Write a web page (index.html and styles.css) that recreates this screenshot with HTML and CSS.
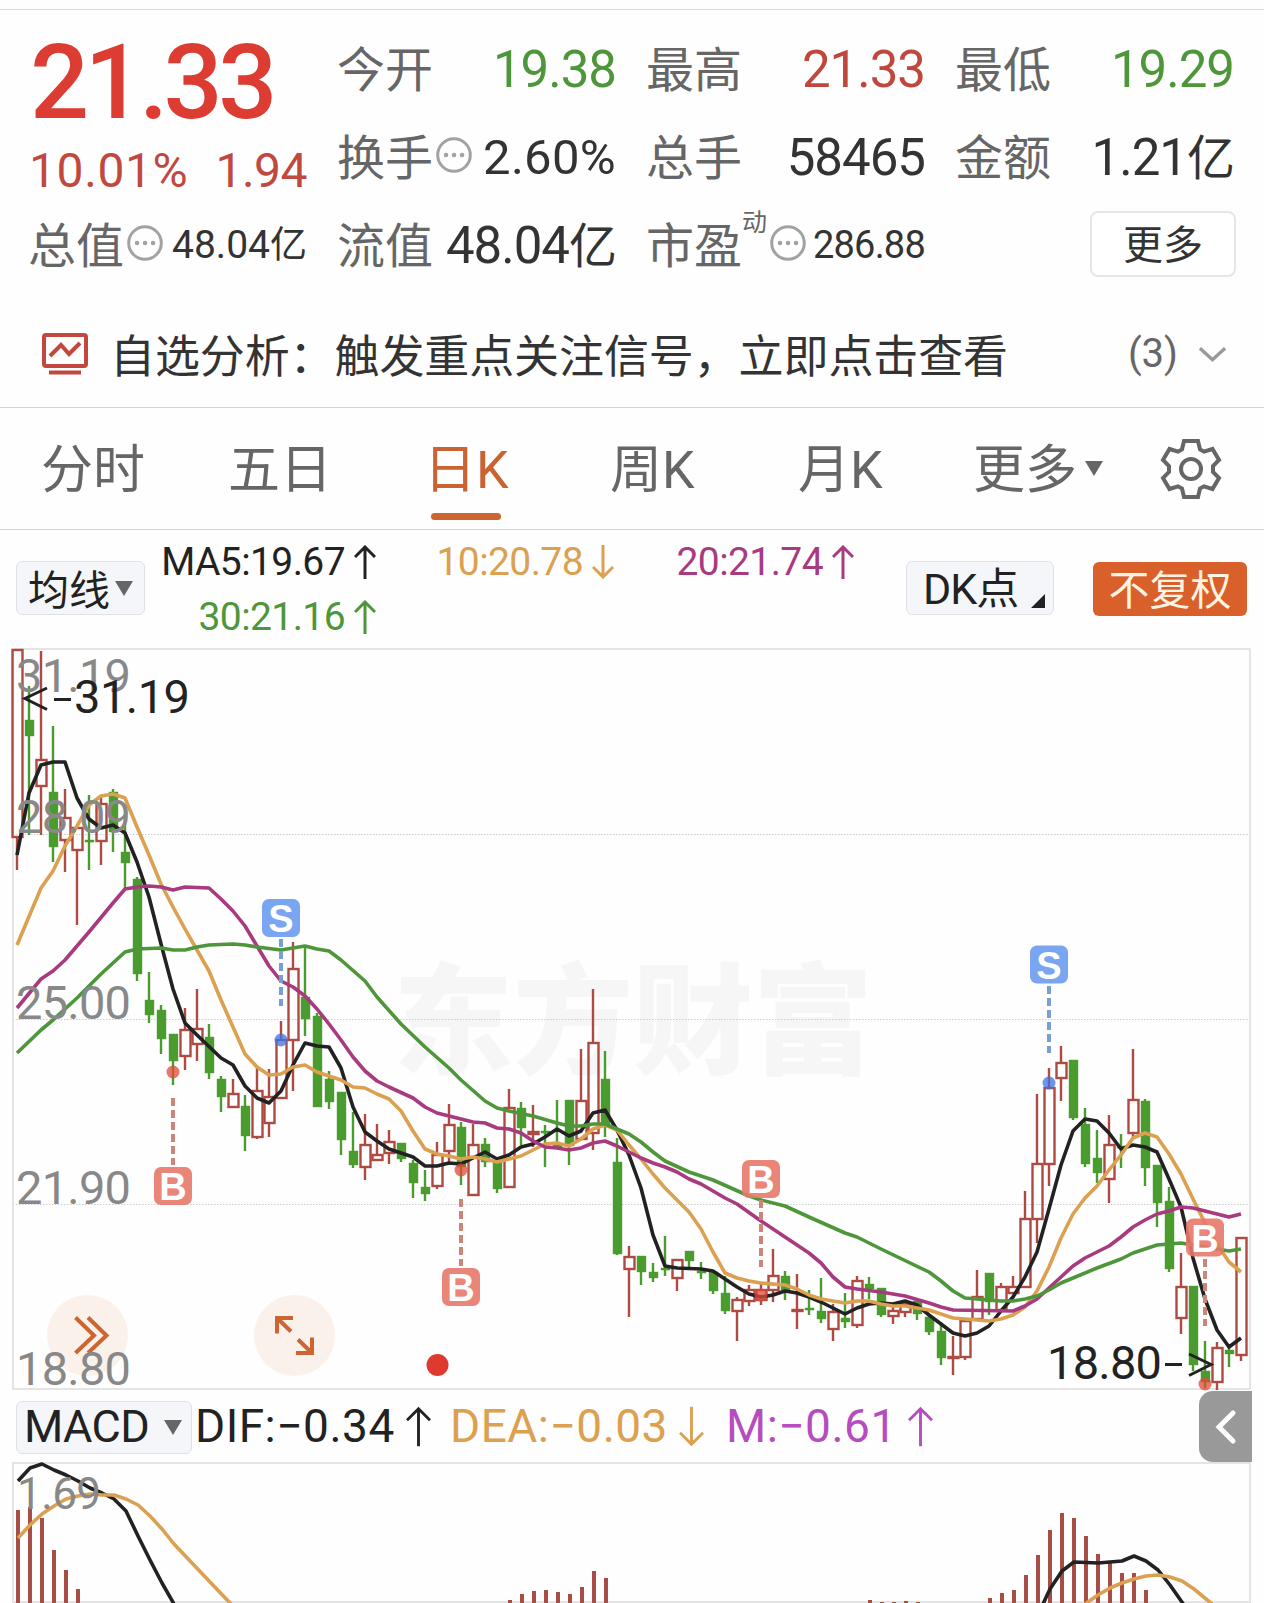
FILE: index.html
```html
<!DOCTYPE html>
<html lang="zh-CN">
<head>
    <meta charset="UTF-8">
    <title>日K</title>
    <link rel="stylesheet" href="styles.css">
</head>
<body>
<div class="quote">
    <div class="price-block">
        <div class="price">21.33</div>
        <div class="change"><span class="rate">10.01%</span><span>1.94</span></div>
    </div>
    <div class="cell"><span class="label">今开</span><span class="num green">19.38</span></div>
    <div class="cell"><span class="label">最高</span><span class="num red">21.33</span></div>
    <div class="cell"><span class="label">最低</span><span class="num green">19.29</span></div>
    <div class="cell"><span class="label">换手</span><svg class="dots" viewBox="0 0 36 36"><circle cx="18" cy="18" r="16.3"/><path d="M10 18h.1M18 18h.1M26 18h.1"/></svg><span class="num pct">2.60%</span></div>
    <div class="cell"><span class="label">总手</span><span class="num">58465</span></div>
    <div class="cell"><span class="label">金额</span><span class="num">1.21<i>亿</i></span></div>
    <div class="cell"><span class="label">总值</span><svg class="dots" viewBox="0 0 36 36"><circle cx="18" cy="18" r="16.3"/><path d="M10 18h.1M18 18h.1M26 18h.1"/></svg><span class="num small">48.04<i>亿</i></span></div>
    <div class="cell"><span class="label">流值</span><span class="num">48.04<i>亿</i></span></div>
    <div class="cell"><span class="label">市盈</span><span class="sup">动</span><svg class="dots" viewBox="0 0 36 36"><circle cx="18" cy="18" r="16.3"/><path d="M10 18h.1M18 18h.1M26 18h.1"/></svg><span class="num small pe">286.88</span></div>
    <div class="cell end"><button class="more">更多</button></div>
</div>

<div class="notice">
    <svg class="notice-icon" viewBox="0 0 46 42"><rect x="2" y="2" width="42" height="31" rx="2"/><path d="M8 23l11-11 8 9 11-11M7 39.5h32"/></svg>
    <span class="notice-text">自选分析：触发重点关注信号，立即点击查看</span>
    <span class="notice-count">(3)</span>
    <svg class="chevron" viewBox="0 0 30 18"><path d="M2 3l13 12L28 3"/></svg>
</div>

<div class="tabs">
    <span>分时</span>
    <span>五日</span>
    <span class="active">日K</span>
    <span>周K</span>
    <span>月K</span>
    <span>更多<b class="tri"></b></span>
    <svg class="gear" viewBox="-31 -31 62 62"><path d="M-7-28H7L9-19.5 13-17.300 21.500-20 28-9 22-3V3L28 9 21.500 20 13 17.300 9 19.500 7 28H-7L-9 19.500-13 17.300-21.500 20-28 9-22 3V-3L-28-9-21.500-20-13-17.300-9-19.500Z"/><circle r="10"/></svg>
</div>

<div class="ma-bar">
    <button class="btn ma-btn">均线<b class="tri"></b></button>
    <div class="ma-values">
        <span class="ma black">MA5:19.67<svg class="arrow" viewBox="0 0 22 34"><path d="M11 34V2M1 12L11 2l10 10"/></svg></span>
        <span class="ma orange">10:20.78<svg class="arrow" viewBox="0 0 22 34"><path d="M11 0v32M1 22l10 10 10-10"/></svg></span>
        <span class="ma purple">20:21.74<svg class="arrow" viewBox="0 0 22 34"><path d="M11 34V2M1 12L11 2l10 10"/></svg></span>
        <span class="ma green">30:21.16<svg class="arrow" viewBox="0 0 22 34"><path d="M11 34V2M1 12L11 2l10 10"/></svg></span>
    </div>
    <button class="btn dk-btn">DK点<b class="corner"></b></button>
    <button class="btn fq-btn">不复权</button>
</div>

<svg class="kline" id="kline" viewBox="12 648 1241 743">
    <text class="watermark" x="393" y="1065" textLength="480">东方财富</text>
    <path class="grid" d="M13 834.500H1251M13 1019.500H1251M13 1204.500H1251"/>
    <rect class="frame" x="13" y="649" width="1237" height="740"/>
    <g id="candles"></g>
    <g id="lines"></g>
    <g id="marks"></g>
    <circle class="float" cx="87.500" cy="1335.500" r="40.500"/>
    <path class="float-icon" d="M75.500 1317.500l18.500 18-18.500 17.500M88 1317.500l18.500 18-18.500 17.500"/>
    <circle class="float" cx="294.500" cy="1335.500" r="40.500"/>
    <path class="float-icon" d="M293 1318H277V1333.500M277 1318l14 13.500M296 1353H312V1337.500M312 1353l-14-13.500"/>
    <circle class="red-dot" cx="437.500" cy="1365" r="11"/>
    <g class="axis">
        <text x="16" y="692" textLength="115">31.19</text>
        <text x="16" y="833" textLength="115">28.09</text>
        <text x="16" y="1019" textLength="115">25.00</text>
        <text x="16" y="1204" textLength="115">21.90</text>
        <text x="16" y="1385" textLength="115">18.80</text>
    </g>
    <g class="extreme">
        <path d="M47 688L25 698.500 47 709.500M54 699.500H71"/>
        <text x="74" y="713" textLength="116">31.19</text>
        <path d="M1189 1354l22 10.500-22 11M1165 1364.500h17"/>
        <text x="1047" y="1379" textLength="115">18.80</text>
    </g>
</svg>

<div class="macd-bar">
    <button class="btn macd-btn">MACD<b class="tri"></b></button>
    <span class="macd dif">DIF:−0.34<svg class="arrow" viewBox="0 0 26 41"><path d="M13 41V2M1 14L13 2l12 12"/></svg></span>
    <span class="macd dea">DEA:−0.03<svg class="arrow" viewBox="0 0 26 41"><path d="M13 0v39M1 27l12 12 12-12"/></svg></span>
    <span class="macd m">M:−0.61<svg class="arrow" viewBox="0 0 26 41"><path d="M13 41V2M1 14L13 2l12 12"/></svg></span>
    <div class="drawer"><svg viewBox="0 0 24 36"><path d="M19 4L5 18l14 14"/></svg></div>
</div>

<svg class="macd-chart" viewBox="12 1462 1241 141">
    <rect class="frame" x="13" y="1463" width="1237" height="139"/>
    <g id="bars"></g>
    <g id="macd-lines"></g>
    <g class="axis"><text class="top-value" x="17" y="1509" textLength="84">1.69</text></g>
</svg>

<script src="chart.js"></script>
</body>
</html>
```

FILE: styles.css
```css
body {
    margin: 0;
    width: 1264px;
    height: 1603px;
    overflow: hidden;
    background: #fefefe;
    color: #333;
    font-family: Roboto, "Noto Sans CJK SC", sans-serif;
}

button {
    font-family: inherit;
    padding: 0;
    margin: 0;
    box-sizing: border-box;
}

.red { color: #bf473d; }
.green { color: #4d963a; }
.black { color: #222; }
.orange { color: #dba050; }
.purple { color: #a83a80; }

/* quote */
.quote {
    display: grid;
    grid-template-columns: repeat(4, 278px);
    grid-template-rows: repeat(3, 88px);
    column-gap: 31px;
    margin-top: 9px;
    padding: 14px 29px 0;
    border-top: 1px solid #d9d9d9;
}

.price-block {
    grid-row: span 2;
}

.price {
    padding: 3px 0 0 1px;
    color: #dc3c32;
    font-size: 104px;
    font-weight: 500;
    line-height: 112px;
    letter-spacing: -4.5px;
}

.change {
    display: flex;
    justify-content: space-between;
    color: #c1483f;
    font-size: 48px;
    line-height: 64px;
    letter-spacing: -0.5px;
}

.rate {
    letter-spacing: 0.6px;
}

.cell {
    display: flex;
    align-items: center;
    white-space: nowrap;
}

.label {
    padding-top: 5px;
    margin-left: -1px;
    color: #666;
    font-size: 48px;
    line-height: 83px;
}

.num {
    padding-top: 3px;
    margin-left: auto;
    font-size: 51px;
    line-height: 85px;
    letter-spacing: -1px;
}

.num i {
    font-style: normal;
    font-size: 48px;
}

.pct {
    font-size: 49px;
    letter-spacing: 0.3px;
}

.small {
    font-size: 39px;
    letter-spacing: 0;
}

.small i {
    font-size: 37px;
}

.pe {
    font-size: 38px;
    letter-spacing: -0.8px;
}

.sup {
    align-self: flex-start;
    color: #666;
    font-size: 25px;
    line-height: 24px;
    margin-top: 11px;
}

.dots {
    width: 36px;
    height: 36px;
    margin: 0 0 2px 3px;
    fill: none;
    stroke: #a2a2a2;
    stroke-width: 3;
}

.dots path {
    stroke-width: 4.5;
    stroke-linecap: round;
}

.end {
    justify-content: flex-end;
}

.more {
    width: 146px;
    height: 66px;
    margin-right: -2px;
    padding-bottom: 5px;
    background: #fff;
    border: 2px solid #e6e6e6;
    border-radius: 8px;
    color: #333;
    font-size: 40px;
}

/* notice */
.notice {
    display: flex;
    align-items: center;
    height: 119px;
    padding: 12px 37px 0 42px;
    box-sizing: border-box;
}

.notice-icon {
    width: 46px;
    height: 42px;
    fill: none;
    stroke: #c2473e;
    stroke-width: 4;
}

.notice-text {
    margin-left: 22px;
    font-size: 45px;
    letter-spacing: -0.1px;
    white-space: nowrap;
}

.notice-count {
    margin-left: auto;
    color: #666;
    font-size: 40px;
}

.chevron {
    width: 29px;
    height: 18px;
    margin-left: 20px;
    fill: none;
    stroke: #999;
    stroke-width: 3.5;
}

/* period tabs */
.tabs {
    display: grid;
    grid-template-columns: 187px 196px 186px 188px 175px 187px 62px;
    align-items: center;
    height: 123px;
    padding-left: 41px;
    box-sizing: border-box;
    border-top: 1px solid #d4d4d4;
    border-bottom: 1px solid #d4d4d4;
    color: #666;
    font-size: 52px;
    line-height: 121px;
}

.tabs span {
    display: flex;
    align-items: center;
    height: 117px;
    padding-top: 4px;
    white-space: nowrap;
}

.tabs .active {
    position: relative;
    color: #cb6231;
}

.tabs .active::after {
    content: "";
    position: absolute;
    left: 7px;
    bottom: 9px;
    width: 70px;
    height: 7px;
    border-radius: 4px;
    background: #cf6430;
}

.tri {
    width: 0;
    height: 0;
    border-left: 9px solid transparent;
    border-right: 9px solid transparent;
    border-top: 15px solid #666;
}

.tabs .tri {
    margin: 0 0 4px 8px;
}

.gear {
    width: 62px;
    height: 62px;
    fill: none;
    stroke: #666;
    stroke-width: 4;
}

/* moving averages */
.ma-bar {
    display: flex;
    height: 118px;
    padding: 0 16px;
}

.btn {
    display: flex;
    align-items: center;
    height: 54px;
    background: #f5f6f9;
    border: 1px solid #dfe1e4;
    border-radius: 6px;
    color: #222;
    white-space: nowrap;
}

.ma-btn {
    width: 129px;
    margin-top: 31px;
    padding: 0 0 3px 11px;
    font-size: 41px;
}

.ma-btn .tri {
    margin: 3px 0 0 5px;
}

.ma-values {
    display: grid;
    grid-template-columns: 231px 238px 240px;
    grid-template-rows: 55px 55px;
    width: 709px;
    margin-top: 4px;
    justify-items: end;
}

.ma {
    display: flex;
    align-items: center;
    font-size: 39px;
    letter-spacing: -0.6px;
}

.arrow {
    width: 22px;
    height: 34px;
    margin-left: 9px;
    fill: none;
    stroke: currentColor;
    stroke-width: 3;
}

.dk-btn {
    width: 148px;
    margin: 31px 39px 0 52px;
    padding: 0 0 6px 16px;
    font-size: 43px;
    letter-spacing: -1px;
}

.corner {
    align-self: flex-end;
    margin: 0 0 0 13px;
    border-left: 14px solid transparent;
    border-bottom: 14px solid #222;
}

.fq-btn {
    width: 154px;
    margin-top: 32px;
    padding-bottom: 4px;
    justify-content: center;
    background: #d9602a;
    border: none;
    color: #fff3e4;
    font-size: 41px;
}

/* charts */
.kline,
.macd-chart {
    display: block;
    width: 1241px;
    margin-left: 12px;
    overflow: visible;
}

.kline {
    height: 743px;
}

.macd-chart {
    height: 141px;
}

.frame {
    fill: none;
    stroke: #e4e4e4;
    stroke-width: 2;
}

.grid {
    stroke: #ccc;
    stroke-dasharray: 1.5 1.5;
}

.watermark {
    fill: #f6f6f6;
    font: 900 120px "Noto Sans CJK SC", sans-serif;
}

.axis {
    fill: #888;
    font-size: 47px;
}

.top-value {
    font-size: 44px;
}

.extreme {
    fill: #222;
    font-size: 47px;
}

.extreme path {
    fill: none;
    stroke: #222;
    stroke-width: 3;
}

.float {
    fill: #fbf1eb;
}

.float-icon {
    fill: none;
    stroke: #cc6532;
    stroke-width: 4;
}

.red-dot {
    fill: #df3a30;
}

.up {
    fill: none;
    stroke: #ae4a41;
    stroke-width: 2.4;
}

.down {
    fill: #4a9c2e;
    stroke: #4a9c2e;
    stroke-width: 2.4;
}

.line {
    fill: none;
    stroke-width: 3.6;
    stroke-linejoin: round;
}

.badge-text {
    fill: #fff;
    font: bold 38px "Liberation Sans", sans-serif;
    text-anchor: middle;
}

/* macd */
.macd-bar {
    display: flex;
    height: 71px;
    padding-left: 16px;
}

.macd-btn {
    width: 176px;
    height: 53px;
    margin-top: 10px;
    padding: 0 0 3px 7px;
    font-size: 45px;
    letter-spacing: -0.6px;
}

.macd-btn .tri {
    margin: 3px 0 0 15px;
}

.macd {
    display: flex;
    align-items: center;
    height: 70px;
    font-size: 46px;
    letter-spacing: 0.5px;
    color: #222;
}

.macd .arrow {
    width: 25px;
    height: 41px;
    margin-left: 11px;
}

.macd.dif {
    width: 255px;
    margin-left: 3px;
}

.macd.dea {
    width: 276px;
    color: #dba050;
}

.macd.m {
    color: #b54cc0;
}

.drawer {
    display: flex;
    align-items: center;
    justify-content: center;
    width: 53px;
    height: 71px;
    margin: 0 12px 0 auto;
    border-radius: 14px 0 0 14px;
    background: #999;
}

.drawer svg {
    width: 24px;
    height: 36px;
    fill: none;
    stroke: #fff;
    stroke-width: 5;
    stroke-linecap: round;
}
```

FILE: chart.js
```js
// direction, body top, body bottom, high, low
var candles = [
    ['u',650,837,650,870], ['d',720,736,686,835], ['u',760,786,651,835], ['d',792,847,726,862],
    ['u',818,840,789,872], ['u',828,850,828,925], ['d',840,841,795,870], ['u',804,841,795,865],
    ['d',792,832,789,852], ['d',852,863,815,888], ['d',879,974,877,981], ['d',1000,1015,972,1023],
    ['d',1010,1039,1005,1054], ['d',1034,1061,1034,1085], ['u',1030,1056,1008,1070], ['u',1029,1044,989,1061],
    ['d',1037,1073,1024,1079], ['d',1079,1097,1076,1112], ['u',1094,1107,1079,1107], ['d',1106,1136,1095,1151],
    ['u',1091,1137,1067,1139], ['u',1097,1123,1069,1137], ['u',1040,1098,1021,1098], ['u',969,1040,942,1091],
    ['d',997,1019,947,1036], ['d',1016,1107,1013,1107], ['d',1079,1102,1071,1109], ['d',1092,1140,1092,1155],
    ['d',1151,1165,1112,1168], ['u',1145,1167,1114,1180], ['u',1155,1160,1124,1160], ['u',1142,1153,1130,1164],
    ['d',1143,1159,1143,1162], ['d',1163,1183,1160,1198], ['d',1187,1194,1170,1201], ['u',1155,1186,1142,1189],
    ['u',1125,1151,1104,1163], ['d',1127,1167,1122,1185], ['u',1145,1195,1124,1195], ['d',1144,1162,1138,1167],
    ['d',1162,1189,1162,1193], ['u',1108,1187,1089,1187], ['d',1108,1128,1102,1145], ['u',1132,1134,1105,1147],
    ['d',1131,1132,1125,1167], ['d',1145,1146,1100,1149], ['d',1100,1146,1100,1165], ['u',1101,1139,1049,1139],
    ['u',1043,1133,989,1150], ['d',1079,1124,1051,1137], ['d',1162,1254,1138,1255], ['u',1257,1269,1246,1317],
    ['d',1256,1272,1256,1285], ['d',1272,1278,1263,1282], ['d',1268,1269,1236,1276], ['u',1260,1278,1260,1291],
    ['d',1251,1261,1251,1270], ['d',1271,1272,1262,1279], ['d',1272,1291,1270,1294], ['d',1293,1311,1276,1314],
    ['u',1300,1311,1297,1341], ['u',1290,1301,1285,1306], ['u',1290,1300,1283,1305], ['u',1276,1290,1249,1302],
    ['d',1276,1290,1271,1300], ['u',1310,1311,1274,1329], ['d',1308,1309,1290,1315], ['d',1311,1319,1278,1323],
    ['u',1312,1329,1304,1341], ['d',1318,1322,1293,1328], ['u',1281,1325,1276,1328], ['d',1284,1289,1277,1299],
    ['d',1288,1315,1288,1317], ['u',1311,1316,1307,1324], ['u',1304,1312,1300,1317], ['d',1301,1314,1301,1320],
    ['d',1317,1332,1317,1335], ['d',1331,1358,1322,1365], ['u',1357,1358,1336,1375], ['u',1321,1357,1321,1360],
    ['u',1297,1319,1270,1319], ['d',1273,1302,1273,1315], ['u',1287,1310,1283,1310], ['u',1287,1293,1276,1293],
    ['u',1219,1287,1191,1287], ['u',1164,1219,1094,1243], ['u',1088,1164,1068,1186], ['u',1063,1078,1046,1101],
    ['d',1060,1118,1060,1120], ['d',1124,1164,1108,1167], ['d',1158,1173,1130,1183], ['u',1145,1179,1115,1203],
    ['d',1146,1148,1134,1168], ['u',1100,1133,1049,1137], ['d',1101,1168,1099,1186], ['d',1165,1203,1165,1227],
    ['d',1201,1269,1187,1272], ['u',1287,1318,1253,1334], ['d',1286,1365,1286,1371], ['d',1371,1382,1341,1388],
    ['u',1348,1382,1342,1390], ['d',1350,1354,1348,1367], ['u',1238,1355,1238,1361]
];

var ma5 = '17,855 29,793 41,765 53,762 65,762 77,798 89,819 101,828 113,825 125,833 137,862 149,897 161,944 173,989 185,1023 197,1035 221,1058 233,1065 245,1086 257,1098 269,1103 281,1091 293,1065 305,1043 317,1046 329,1047 341,1068 353,1107 365,1132 377,1141 389,1149 401,1153 413,1157 425,1166 437,1166 449,1163 461,1164 473,1158 485,1152 497,1159 509,1155 521,1147 533,1144 545,1137 557,1129 569,1136 581,1131 593,1113 605,1110 617,1130 629,1155 641,1188 653,1235 665,1266 677,1268 701,1269 713,1271 725,1279 737,1287 749,1294 761,1297 773,1295 785,1291 797,1293 809,1297 821,1302 833,1308 845,1314 857,1308 869,1304 881,1303 893,1304 905,1301 917,1305 929,1315 941,1324 953,1333 965,1336 977,1333 989,1326 1001,1311 1013,1297 1025,1277 1037,1252 1049,1209 1061,1165 1073,1131 1085,1119 1097,1121 1109,1133 1121,1149 1133,1145 1145,1147 1157,1152 1169,1179 1181,1207 1193,1258 1205,1299 1217,1330 1229,1347 1241,1338';
var ma10 = '17,945 41,888 53,871 65,846 77,826 89,805 101,796 113,794 125,798 137,827 149,855 161,884 173,907 185,929 197,950 209,971 221,1000 233,1027 245,1054 257,1067 269,1075 281,1074 293,1067 305,1065 317,1072 329,1076 341,1080 353,1087 365,1088 377,1094 389,1099 401,1111 413,1131 425,1149 437,1154 449,1156 461,1159 473,1157 485,1159 497,1162 509,1159 521,1156 533,1150 545,1144 557,1143 569,1146 581,1139 593,1129 605,1125 617,1130 629,1145 641,1159 653,1174 665,1188 677,1200 689,1212 701,1229 713,1252 725,1273 737,1278 749,1281 761,1283 785,1285 797,1289 809,1295 821,1299 833,1301 845,1303 857,1301 869,1301 881,1304 893,1306 905,1306 917,1308 929,1310 941,1314 953,1318 965,1319 989,1321 1001,1319 1013,1315 1025,1307 1037,1291 1049,1267 1061,1238 1073,1214 1085,1198 1097,1186 1109,1170 1121,1155 1133,1138 1145,1133 1157,1137 1169,1154 1181,1174 1193,1199 1205,1223 1217,1244 1229,1262 1241,1272';
var ma20 = '17,1008 41,979 53,971 65,960 89,932 113,903 125,889 137,887 149,886 161,887 173,890 185,887 209,888 221,899 233,911 245,926 257,946 269,966 281,981 293,987 305,996 317,1009 329,1024 341,1040 353,1057 365,1071 377,1081 389,1087 413,1098 425,1107 437,1113 461,1119 473,1122 485,1123 497,1128 509,1129 521,1133 533,1141 545,1147 557,1148 569,1150 581,1148 593,1143 605,1141 617,1146 629,1152 641,1158 653,1163 665,1167 677,1172 689,1179 701,1184 725,1198 737,1204 761,1221 785,1237 809,1253 821,1263 833,1277 845,1287 857,1289 881,1292 905,1296 929,1303 941,1307 953,1310 1013,1311 1025,1306 1037,1299 1049,1288 1061,1277 1073,1266 1085,1258 1097,1252 1109,1246 1121,1237 1133,1227 1145,1220 1157,1214 1169,1211 1181,1207 1193,1208 1205,1211 1229,1217 1241,1214';
var ma30 = '17,1053 41,1030 53,1020 65,1009 77,998 89,986 101,974 125,952 137,949 161,948 173,950 185,950 197,947 209,945 233,944 245,945 257,947 281,950 293,948 305,946 317,949 329,951 341,960 365,981 377,997 401,1024 425,1047 449,1068 461,1080 485,1101 497,1108 509,1111 533,1116 557,1123 569,1126 581,1126 593,1124 605,1124 617,1129 629,1134 641,1142 653,1152 665,1161 689,1172 713,1180 749,1196 761,1200 785,1206 809,1217 845,1233 857,1237 881,1249 929,1272 941,1281 953,1291 965,1298 977,1299 989,1300 1001,1301 1013,1301 1025,1299 1037,1296 1049,1290 1061,1283 1073,1278 1097,1268 1121,1259 1133,1253 1157,1245 1181,1243 1205,1247 1229,1251 1241,1249';

// x, badge top, dash start, dot y, letter
var marks = [
    [281, 899, 939, 1040, 'S'], [1049, 945.5, 986, 1083, 'S'],
    [173, 1167, 1098, 1072, 'B'], [461, 1268, 1199, 1170, 'B'],
    [761, 1160, 1200, 1295, 'B'], [1205, 1218.5, 1259, 1384, 'B']
];

// candle index: bar top
var bars = {
    0: 1510, 1: 1507, 2: 1518, 3: 1550, 4: 1570, 5: 1589,
    41: 1600, 42: 1594, 43: 1591, 44: 1590, 45: 1592, 46: 1594, 47: 1587, 48: 1571, 49: 1578,
    71: 1600, 72: 1602, 73: 1602, 74: 1601, 75: 1602,
    81: 1598, 82: 1593, 83: 1590, 84: 1575, 85: 1555, 86: 1530, 87: 1513, 88: 1518,
    89: 1536, 90: 1554, 91: 1563, 92: 1573, 93: 1573, 94: 1590
};

function line(points, color) {
    return '<polyline class="line" stroke="' + color + '" points="' + points + '"/>';
}

var html = '';
candles.forEach(function(c, i) {
    var x = 17 + i * 12;
    var up = c[0] === 'u';
    html += '<g class="' + (up ? 'up' : 'down') + '">';
    html += '<path d="M' + x + ' ' + c[3] + 'V' + c[1] + 'M' + x + ' ' + c[2] + 'V' + c[4] + '"/>';
    html += '<rect x="' + (x - (up ? 4.5 : 3)) + '" y="' + (c[1] + (up ? 0 : 1)) + '" width="' + (up ? 10 : 7) + '" height="' + Math.max(c[2] - c[1] - (up ? 0 : 2), 0.1) + '"/>';
    html += '</g>';
});
document.getElementById('candles').innerHTML = html;

document.getElementById('lines').innerHTML =
    line(ma5, '#222') + line(ma10, '#dba050') + line(ma20, '#a83a80') + line(ma30, '#4d963a');

html = '';
marks.forEach(function(m) {
    var sell = m[4] === 'S';
    var color = sell ? '#6a9bf0' : '#e8796a';
    html += '<path d="M' + m[0] + ' ' + m[2] + 'v67" stroke="' + (sell ? '#76a0d4' : '#cc8578') + '" stroke-width="4" stroke-dasharray="8 4"/>';
    html += '<circle cx="' + m[0] + '" cy="' + m[3] + '" r="6.5" fill="' + (sell ? '#3f72e3' : '#e04a38') + '" opacity="0.75"/>';
    html += '<rect x="' + (m[0] - 19) + '" y="' + m[1] + '" width="38" height="38" rx="7" fill="' + color + '" opacity="0.9"/>';
    html += '<text class="badge-text" x="' + m[0] + '" y="' + (m[1] + 33) + '">' + m[4] + '</text>';
});
document.getElementById('marks').innerHTML = html;

html = '';
for (var i in bars) {
    html += '<rect x="' + (16 + i * 12) + '" y="' + bars[i] + '" width="4" height="' + (1603 - bars[i]) + '" fill="#a84c46"/>';
}
document.getElementById('bars').innerHTML = html;

document.getElementById('macd-lines').innerHTML =
    line('18,1481 30,1468 42,1464 54,1470 66,1475 78,1481 90,1488 102,1493 114,1499 126,1511 138,1536 150,1560 162,1583 174,1604', '#222') +
    line('1043,1604 1050,1589 1062,1571 1074,1562 1098,1563 1122,1561 1134,1556 1146,1561 1158,1570 1170,1585 1184,1605', '#222') +
    line('18,1538 30,1525 42,1514 54,1506 66,1499 78,1496 90,1494 102,1495 114,1495 126,1499 138,1505 150,1516 162,1529 174,1544 210,1582 231,1604', '#dba050') +
    line('1085,1604 1098,1595 1110,1588 1122,1583 1134,1579 1146,1576 1158,1575 1170,1577 1182,1581 1194,1589 1212,1604', '#dba050');
```
